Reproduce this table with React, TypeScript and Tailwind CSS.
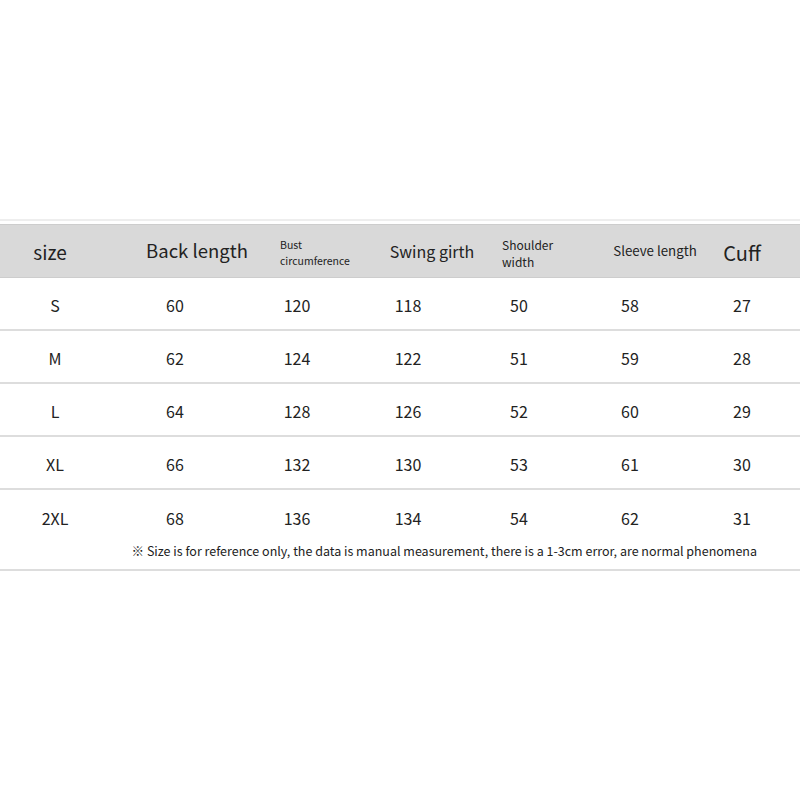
import React from "react";

const rows = [
  ["S", "60", "120", "118", "50", "58", "27"],
  ["M", "62", "124", "122", "51", "59", "28"],
  ["L", "64", "128", "126", "52", "60", "29"],
  ["XL", "66", "132", "130", "53", "61", "30"],
  ["2XL", "68", "136", "134", "54", "62", "31"],
];

const grid = "grid grid-cols-[110px_130px_114px_108px_114px_108px_116px]";

export default function App() {
  return (
    <div
      className="w-[800px] h-[800px] bg-white text-[#222] flex flex-col"
      style={{ fontFamily: '"Noto Sans CJK SC", "Noto Sans", sans-serif' }}
    >
      <div className="h-[219px]" />
      <div className="h-[2px] bg-[#eeeeee]" />
      <div className="h-[3px]" />
      <div className={`${grid} h-[54px] bg-[#d9d9d9] border-y border-[#cdcdcd] items-center whitespace-nowrap`}>
        <div className="flex justify-center pr-[10px] pt-[2px] text-[19px]">size</div>
        <div className="flex justify-center pl-[44px] text-[18.5px]">Back length</div>
        <div className="flex flex-col pl-[40px] pt-[3px] text-[10.5px] leading-[16px]">
          <span>Bust</span>
          <span>circumference</span>
        </div>
        <div className="flex justify-center pl-[48px] text-[16px]">Swing girth</div>
        <div className="flex flex-col pl-[40px] pt-[3px] text-[12px] leading-[17px]">
          <span>Shoulder</span>
          <span>width</span>
        </div>
        <div className="flex justify-center pl-[50px] text-[13.3px]">Sleeve length</div>
        <div className="flex justify-center pt-[3px] text-[20px]">Cuff</div>
      </div>
      {rows.map((r, i) => (
        <div key={i} className="flex flex-col">
          <div className={`${grid} ${i === 4 ? "h-[52px]" : "h-[51px]"} pt-[3px] items-center text-[16px]`}>
            {r.map((c, j) => (
              <div key={j} className="flex justify-center">
                {c}
              </div>
            ))}
          </div>
          {i === 4 && (
            <div className="h-[18px] flex items-center justify-end pr-[43px] text-[12.5px] whitespace-nowrap">
              ※ Size is for reference only, the data is manual measurement, there is a 1-3cm error, are normal phenomena
            </div>
          )}
          {i === 4 && <div className="h-[9px]" />}
          <div className="h-[2px] bg-[#dddddd]" />
        </div>
      ))}
    </div>
  );
}
